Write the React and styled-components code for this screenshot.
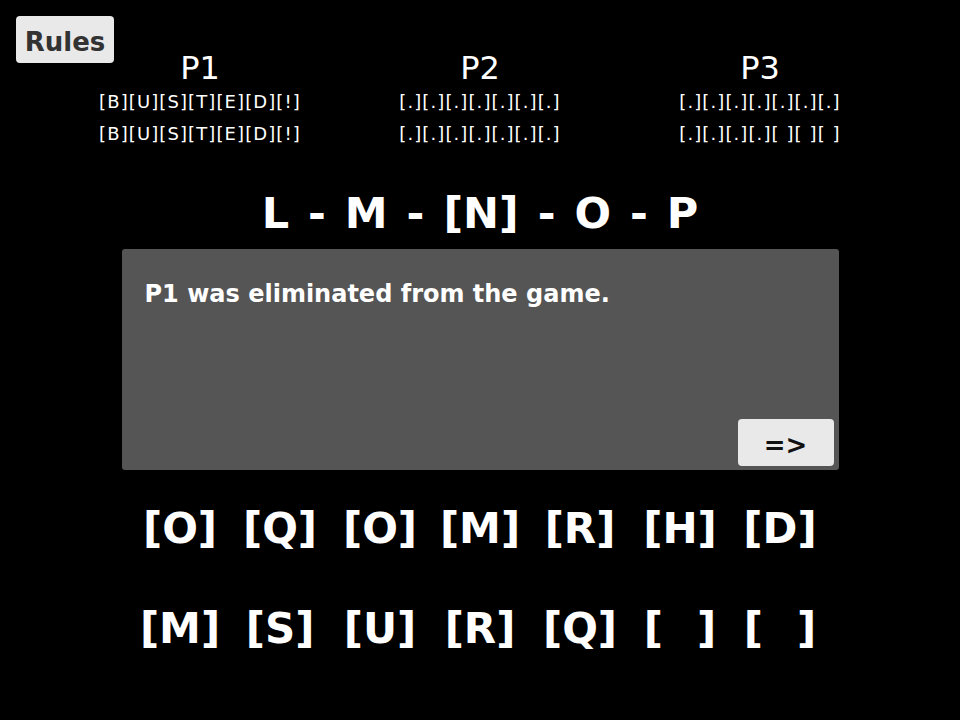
import React from "react";
import styled, { createGlobalStyle } from "styled-components";

const GlobalStyle = createGlobalStyle`
  body {
    margin: 0;
    background: #000;
    font-family: "DejaVu Sans", "Liberation Sans", sans-serif;
  }
`;

const Page = styled.div`
  width: 960px;
  height: 720px;
  background: #000;
  color: #fff;
  display: flex;
  flex-direction: column;
  align-items: center;
  padding-top: 16px;
  box-sizing: border-box;
  overflow: hidden;
`;

const Header = styled.div`
  width: 960px;
  display: grid;
  grid-template-columns: 44px repeat(3, 280px);
  padding-left: 16px;
  box-sizing: border-box;
`;

const GreyButton = styled.button`
  width: ${(props) => props.w || 98}px;
  height: 47px;
  background: #e9e9e9;
  border: none;
  border-radius: 4px;
  font-family: inherit;
  font-weight: bold;
  font-size: ${(props) => props.size || 26}px;
  color: ${(props) => props.color || "#333"};
  padding: 4px 0 0;
  display: flex;
  align-items: center;
  justify-content: center;
  cursor: pointer;
`;

const RulesButton = styled(GreyButton)`
  align-self: start;
`;

const PlayerColumn = styled.div`
  display: flex;
  flex-direction: column;
  align-items: center;
  padding-top: 34px;
`;

const PlayerName = styled.div`
  font-size: 32px;
  line-height: 36px;
`;

const WordRow = styled.div`
  font-size: 18px;
  line-height: 32px;
  letter-spacing: 1.1px;
  white-space: pre;
`;

const Sequence = styled.div`
  margin-top: 35px;
  font-size: 43px;
  font-weight: bold;
  line-height: 56px;
  word-spacing: 4px;
  white-space: pre;
`;

const Panel = styled.div`
  margin-top: 8px;
  width: 717px;
  height: 221px;
  background: #555;
  border-radius: 3px;
  box-sizing: border-box;
  padding: 29px 5px 4px 23px;
  display: flex;
  flex-direction: column;
  justify-content: space-between;
`;

const Message = styled.div`
  font-size: 24px;
  font-weight: bold;
  line-height: 32px;
`;

const NextButton = styled(GreyButton)`
  align-self: flex-end;
`;

const LetterRow = styled.div`
  display: grid;
  grid-template-columns: repeat(7, 100px);
  margin-top: ${(props) => props.gap}px;
`;

const Tile = styled.div`
  display: flex;
  justify-content: center;
  align-items: center;
  font-size: 42px;
  font-weight: bold;
  line-height: 60px;
`;

const Blank = styled.span`
  display: inline-block;
  width: 34px;
`;

const players = [
  { name: "P1", rows: ["[B][U][S][T][E][D][!]", "[B][U][S][T][E][D][!]"] },
  { name: "P2", rows: ["[.][.][.][.][.][.][.]", "[.][.][.][.][.][.][.]"] },
  { name: "P3", rows: ["[.][.][.][.][.][.][.]", "[.][.][.][.][ ][ ][ ]"] },
];

const letterRows = [
  ["O", "Q", "O", "M", "R", "H", "D"],
  ["M", "S", "U", "R", "Q", "", ""],
];

const App = () => {
  return (
    <Page>
      <GlobalStyle />
      <Header>
        <RulesButton>Rules</RulesButton>
        {players.map((p) => (
          <PlayerColumn key={p.name}>
            <PlayerName>{p.name}</PlayerName>
            {p.rows.map((r, i) => (
              <WordRow key={i}>{r}</WordRow>
            ))}
          </PlayerColumn>
        ))}
      </Header>
      <Sequence>L - M - [N] - O - P</Sequence>
      <Panel>
        <Message>P1 was eliminated from the game.</Message>
        <NextButton w={96} color="#111">=&gt;</NextButton>
      </Panel>
      {letterRows.map((row, i) => (
        <LetterRow key={i} gap={i === 0 ? 29 : 40}>
          {row.map((l, j) => (
            <Tile key={j}>
              [{l ? l : <Blank />}]
            </Tile>
          ))}
        </LetterRow>
      ))}
    </Page>
  );
};

export default App;
